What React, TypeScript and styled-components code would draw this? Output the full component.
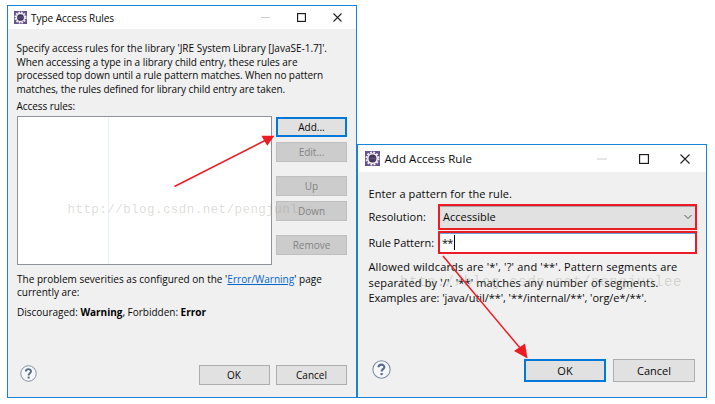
import React from 'react';
import styled, { createGlobalStyle, css } from 'styled-components';

const GlobalStyle = createGlobalStyle`
  * { box-sizing: border-box; }
  body { margin: 0; background: #fff; overflow: hidden; }
`;

const Desktop = styled.main`
  position: relative;
  display: flex;
  align-items: flex-end;
  width: 715px;
  height: 404px;
  padding: 0 0 6px 7px;
  font-family: 'Open Sans', 'Noto Sans', sans-serif;
  color: #080808;
`;

const Dialog = styled.section<{ $height: number; $fontSize: number }>`
  display: flex;
  flex-direction: column;
  width: 350px;
  height: ${p => p.$height}px;
  border: 1px solid #1883d7;
  background: #f0f0f0;
  font-size: ${p => p.$fontSize}px;
`;

const TitleBar = styled.header<{ $large?: boolean }>`
  display: flex;
  align-items: center;
  flex: none;
  height: ${p => (p.$large ? 27 : 23)}px;
  padding: ${p => (p.$large ? '0 16px 0 7px' : '0 14px 0 6px')};
  gap: ${p => (p.$large ? 4.5 : 4)}px;
  background: #fff;
`;

const Title = styled.h1<{ $spacing: number; $size: number }>`
  flex: 1;
  margin: 0;
  font-size: ${p => p.$size}px;
  font-weight: 400;
  line-height: 16px;
  letter-spacing: ${p => p.$spacing}px;
  white-space: nowrap;
`;

const WindowControls = styled.div<{ $gap: number }>`
  display: flex;
  align-items: center;
  gap: ${p => p.$gap}px;
`;

const Paragraph = styled.div<{ $pitch: number }>`
  line-height: ${p => p.$pitch}px;
`;

const Line = styled.div<{ $spacing?: number }>`
  letter-spacing: ${p => p.$spacing ?? 0}px;
  white-space: pre;
`;

const RulesBody = styled.div`
  display: flex;
  flex-direction: column;
  flex: 1;
  padding: 13px 9px 12px 8.5px;
`;

const RulesLabel = styled.div`
  margin-top: 3px;
  height: 17px;
  line-height: 15px;
  letter-spacing: -0.07px;
`;

const RulesArea = styled.div`
  display: grid;
  grid-template-columns: 255px 71px;
  gap: 4.5px;
  height: 149px;
`;

const RulesTable = styled.div`
  display: grid;
  grid-template-columns: 91px 1fr;
  border: 1px solid #8f949c;
  background: #fff;
`;

const TableColumn = styled.div`
  border-right: 1px solid #e9f2f9;
  &:last-child { border-right: 0; }
`;

const ButtonStack = styled.div`
  display: flex;
  flex-direction: column;
  gap: 14px;
  padding-top: 1px;
`;

const ButtonPair = styled.div`
  display: flex;
  flex-direction: column;
  gap: 5px;
`;

const Button = styled.button<{ $large?: boolean; $primary?: boolean }>`
  display: flex;
  align-items: center;
  justify-content: center;
  width: ${p => (p.$large ? 82 : 71)}px;
  height: ${p => (p.$large ? 23 : 20)}px;
  padding: 0;
  border: 1px solid #adadad;
  background: #e1e1e1;
  color: #080808;
  font: inherit;
  line-height: 14px;
  ${p => p.$primary && css`border: 2px solid #0078d7;`}
  &:disabled {
    border-color: #bfbfbf;
    background: #ccc;
    color: #838383;
  }
`;

const Severity = styled.div`
  padding: 7.5px 0 0 0.5px;
`;

const SeverityLevels = styled.div`
  margin-top: 6px;
  line-height: 13.5px;
  letter-spacing: -0.01px;
  white-space: nowrap;
  b { color: #000; }
`;

const Link = styled.a`
  color: #0066cc;
  text-decoration: underline;
  text-underline-offset: 1px;
`;

const Footer = styled.footer<{ $gap: number; $inset?: number }>`
  display: flex;
  align-items: center;
  gap: ${p => p.$gap}px;
  margin-top: auto;
  padding-right: ${p => p.$inset ?? 0}px;
`;

const HelpSlot = styled.div<{ $indent: number; $lift: number }>`
  display: flex;
  flex: 1;
  padding: 0 0 ${p => p.$lift}px ${p => p.$indent}px;
`;

const PatternBody = styled.div`
  display: flex;
  flex-direction: column;
  flex: 1;
  padding: 14px 9px 15px 10.5px;
`;

const Form = styled.div`
  display: grid;
  grid-template-columns: 69.5px 259px;
  grid-template-rows: 26px 23px;
  row-gap: 1.5px;
  align-items: center;
  margin-top: 2px;
  margin-bottom: 5px;
`;

const Label = styled.label<{ $spacing?: number }>`
  letter-spacing: ${p => p.$spacing ?? 0}px;
  white-space: nowrap;
`;

const Combo = styled.div`
  display: flex;
  align-items: center;
  justify-content: space-between;
  height: 26px;
  padding: 0 3px;
  border: 2px solid #ed1c24;
  background: #e1e1e1;
  box-shadow: inset 0 1px 0 #a6a6a6;
`;

const PatternInput = styled.div`
  display: flex;
  align-items: center;
  height: 23px;
  padding: 0 2px;
  border: 2px solid #ed1c24;
  background: #fff;
  box-shadow: inset 0 1px 0 #64a5dc;
  letter-spacing: -0.8px;
`;

const Caret = styled.span`
  width: 1px;
  height: 15px;
  margin-left: 1px;
  background: #000;
`;

const Watermark = styled.div<{ $x: number; $y: number; $size: number; $pitch: number }>`
  position: absolute;
  left: ${p => p.$x}px;
  top: ${p => p.$y}px;
  font-family: 'Liberation Mono', monospace;
  font-size: ${p => p.$size}px;
  line-height: 18px;
  letter-spacing: ${p => p.$pitch - p.$size * 0.6}px;
  color: rgba(150, 148, 135, 0.33);
  white-space: nowrap;
  pointer-events: none;
`;

const WatermarkTail = styled.span`
  color: rgba(150, 148, 135, 0.12);
`;

const Arrows = styled.svg`
  position: absolute;
  inset: 0;
  pointer-events: none;
`;

function EclipseIcon({ size }: { size: number }) {
  return (
    <svg width={size} height={size} viewBox="0 0 16 16">
      <rect width="16" height="16" fill="#66528f" />
      <circle cx="8" cy="8" r="6.5" fill="none" stroke="#f4f1ee" strokeWidth="2" strokeDasharray="2 1.4" />
      <circle cx="8" cy="8" r="5" fill="#3b3153" stroke="#f0edf2" strokeWidth="1.7" />
      <path d="M4.5 6.5h7M4.2 8h7.6M4.5 9.5h7" stroke="#695b87" strokeWidth=".7" />
    </svg>
  );
}

function Controls({ large }: { large?: boolean }) {
  const s = large ? 10 : 9;
  return (
    <WindowControls $gap={large ? 31.5 : 27}>
      <svg width={s} height={s}><path d={`M0 ${s / 2}H${s}`} stroke="#ccc" /></svg>
      <svg width={s} height={s}><rect x=".6" y=".6" width={s - 1.2} height={s - 1.2} fill="none" stroke="#111" strokeWidth="1.1" /></svg>
      <svg width={s} height={s}><path d={`M.5 .5L${s - 0.5} ${s - 0.5}M${s - 0.5} .5L.5 ${s - 0.5}`} stroke="#222" strokeWidth="1.1" /></svg>
    </WindowControls>
  );
}

function HelpIcon({ size }: { size: number }) {
  return (
    <svg width={size} height={size} viewBox="0 0 18 18" fill="none" stroke="#5b6b8c">
      <circle cx="9" cy="9" r="8.2" fill="#f6f8fb" stroke="#7c8aa3" strokeWidth="1" />
      <path d="M6.2 6.9C6.3 3.6 11.7 3.6 11.7 6.7C11.7 8.7 9.1 8.7 9.1 11" strokeWidth="2" />
      <path d="M9.1 12.3v2" strokeWidth="2.1" />
    </svg>
  );
}

function TypeAccessRules() {
  return (
    <Dialog $height={393} $fontSize={10}>
      <TitleBar>
        <EclipseIcon size={13} />
        <Title $size={10} $spacing={-0.04}>Type Access Rules</Title>
        <Controls />
      </TitleBar>
      <RulesBody>
        <Paragraph $pitch={13.5}>
          <Line $spacing={0.01}>Specify access rules for the library 'JRE System Library [JavaSE-1.7]'.</Line>
          <Line $spacing={-0.035}>When accessing a type in a library child entry, these rules are</Line>
          <Line $spacing={-0.074}>processed top down until a rule pattern matches. When no pattern</Line>
          <Line $spacing={-0.08}>matches, the rules defined for library child entry are taken.</Line>
        </Paragraph>
        <RulesLabel>Access rules:</RulesLabel>
        <RulesArea>
          <RulesTable><TableColumn /><TableColumn /></RulesTable>
          <ButtonStack>
            <ButtonPair>
              <Button $primary>Add...</Button>
              <Button disabled>Edit...</Button>
            </ButtonPair>
            <ButtonPair>
              <Button disabled>Up</Button>
              <Button disabled>Down</Button>
            </ButtonPair>
            <Button disabled>Remove</Button>
          </ButtonStack>
        </RulesArea>
        <Severity>
          <Paragraph $pitch={13.5}>
            <Line $spacing={0.02}>The problem severities as configured on the '<Link>Error/Warning</Link>' page</Line>
            <Line>currently are:</Line>
          </Paragraph>
          <SeverityLevels>Discouraged: <b>Warning</b>, Forbidden: <b>Error</b></SeverityLevels>
        </Severity>
        <Footer $gap={6.5}>
          <HelpSlot $indent={3} $lift={3}><HelpIcon size={17} /></HelpSlot>
          <Button>OK</Button>
          <Button>Cancel</Button>
        </Footer>
      </RulesBody>
    </Dialog>
  );
}

function AddAccessRule() {
  return (
    <Dialog $height={254} $fontSize={11}>
      <TitleBar $large>
        <EclipseIcon size={15} />
        <Title $size={11.5} $spacing={0.06}>Add Access Rule</Title>
        <Controls large />
      </TitleBar>
      <PatternBody>
        <Paragraph $pitch={15.5}>
          <Line $spacing={0.1}>Enter a pattern for the rule.</Line>
        </Paragraph>
        <Form>
          <Label>Resolution:</Label>
          <Combo>
            Accessible
            <svg width="8" height="6"><path d="M.5 1L4 4.5L7.5 1" fill="none" stroke="#555" /></svg>
          </Combo>
          <Label $spacing={-0.05}>Rule Pattern:</Label>
          <PatternInput>**<Caret /></PatternInput>
        </Form>
        <Paragraph $pitch={15.5}>
          <Line $spacing={0.165}>Allowed wildcards are '*', '?' and '**'. Pattern segments are</Line>
          <Line $spacing={0.16}>separated by '/'. '**' matches any number of segments.</Line>
          <Line $spacing={-0.06}>Examples are: 'java/util/**', '**/internal/**', 'org/e*/**'.</Line>
        </Paragraph>
        <Footer $gap={7} $inset={2}>
          <HelpSlot $indent={3.5} $lift={2}><HelpIcon size={19} /></HelpSlot>
          <Button $large $primary>OK</Button>
          <Button $large>Cancel</Button>
        </Footer>
      </PatternBody>
    </Dialog>
  );
}

export default function App() {
  return (
    <>
      <GlobalStyle />
      <Desktop>
        <TypeAccessRules />
        <AddAccessRule />
        <Watermark $x={67.5} $y={201} $size={12.5} $pitch={7.95}>
          http://blog.csdn.net/pengjunl<WatermarkTail>ee</WatermarkTail>
        </Watermark>
        <Watermark $x={400} $y={273} $size={14} $pitch={9.1}>http://blog.csdn.net/pengjunlee</Watermark>
        <Arrows width="715" height="404" fill="#ed1c24" stroke="#ed1c24">
          <path d="M174.5 186.5L266 140M443 256L520 348" strokeWidth="1.5" />
          <path d="M261.3 135.7H274.3L267.3 145.7ZM514 351L525 343.5L527.5 358.5Z" stroke="none" />
        </Arrows>
      </Desktop>
    </>
  );
}
